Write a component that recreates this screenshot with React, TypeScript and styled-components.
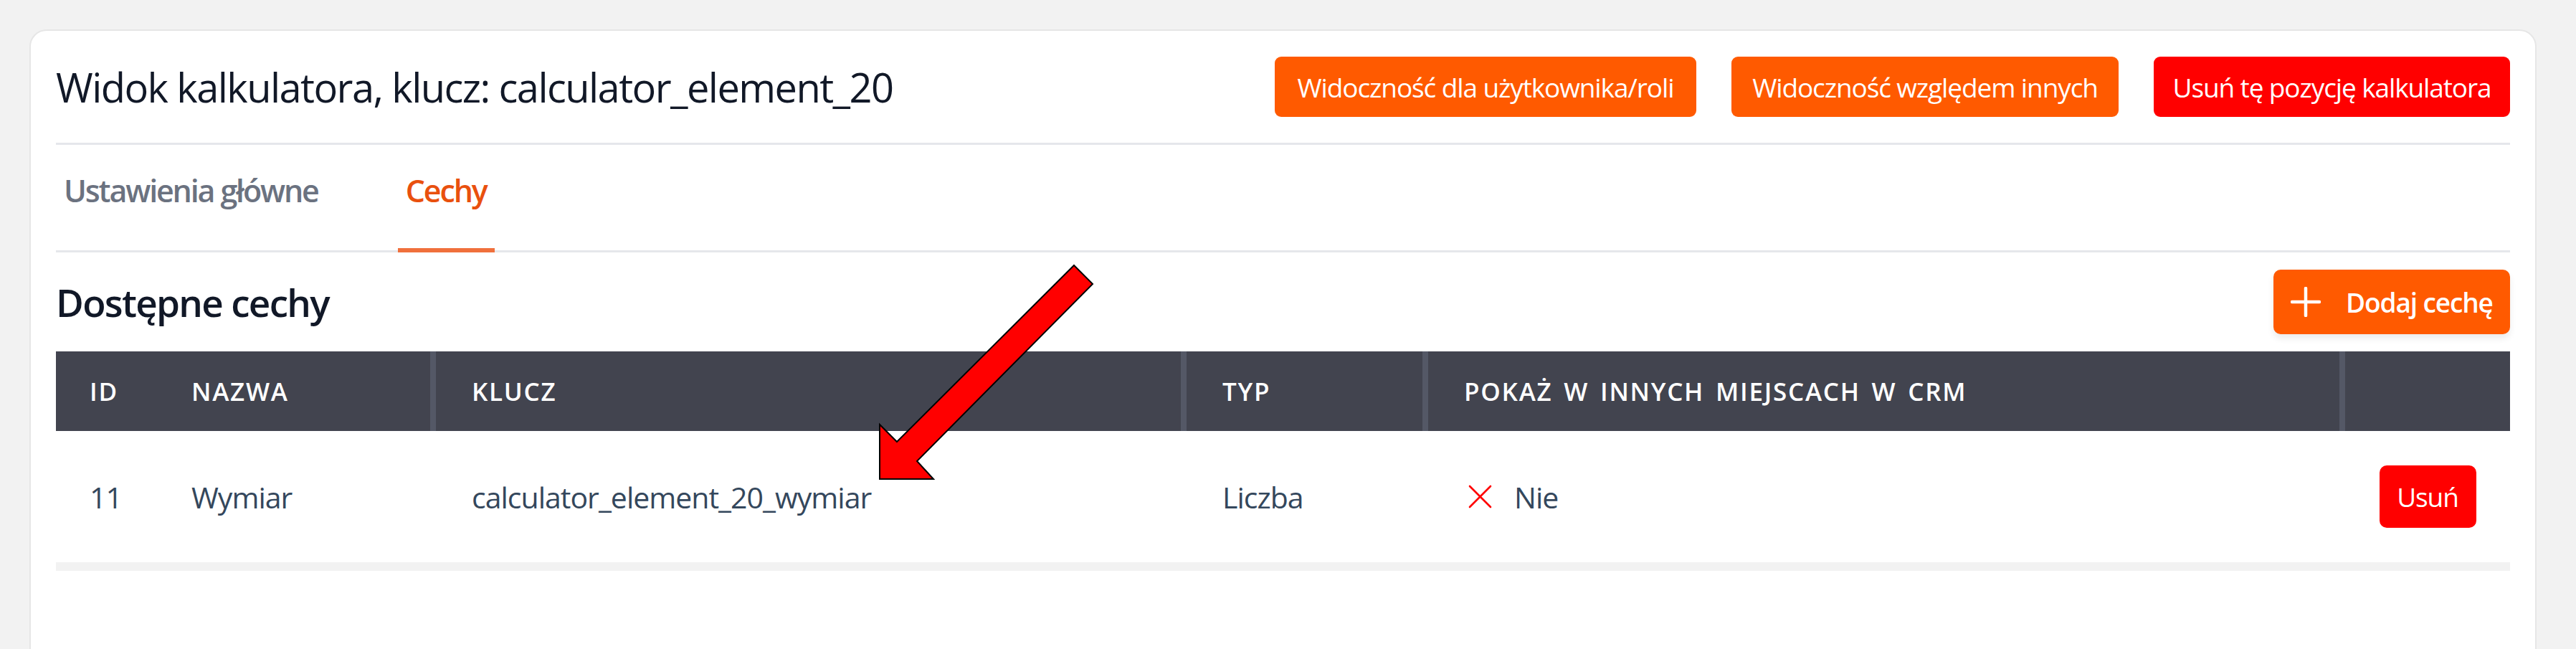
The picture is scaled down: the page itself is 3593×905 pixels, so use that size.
import React from "react";
import styled, { createGlobalStyle } from "styled-components";

const GlobalStyle = createGlobalStyle`
  html, body {
    margin: 0;
    padding: 0;
    background: #f2f2f2;
  }
  body {
    font-family: "Open Sans", "Noto Sans", "DejaVu Sans", sans-serif;
  }
  *, *::before, *::after {
    box-sizing: border-box;
  }
`;

const Page = styled.div`
  position: relative;
  width: 3593px;
  height: 905px;
  overflow: hidden;
  padding: 41px 55px 0 41px;
`;

const Card = styled.section`
  background: #ffffff;
  border: 2px solid #e6e6e6;
  border-radius: 24px;
  padding: 36px 35px 0;
  min-height: 1000px;
`;

const Header = styled.header`
  display: flex;
  align-items: center;
  gap: 49px;
  padding-bottom: 36px;
  border-bottom: 3px solid #e5e7eb;
`;

const Title = styled.h1`
  flex: 1;
  margin: 0;
  font-size: 56px;
  line-height: 84px;
  font-weight: 400;
  color: #111827;
  letter-spacing: -0.028em;
  white-space: nowrap;
`;

const ActionButton = styled.button<{ $tone: "orange" | "red"; $w: number }>`
  width: ${(p) => p.$w}px;
  height: 84px;
  padding: 0;
  border: 0;
  border-radius: 9px;
  background: ${(p) => (p.$tone === "red" ? "#ff0000" : "#ff5a00")};
  color: #ffffff;
  font-family: inherit;
  font-size: 37px;
  font-weight: 400;
  letter-spacing: -0.03em;
  white-space: nowrap;
  text-align: center;
`;

const Tabs = styled.nav`
  display: flex;
  gap: 100px;
  border-bottom: 3px solid #e5e7eb;
`;

const Tab = styled.div<{ $active?: boolean }>`
  padding: 34px 11px 50px;
  margin-bottom: -3px;
  border-bottom: 6px solid ${(p) => (p.$active ? "#f0703c" : "transparent")};
  font-size: 43px;
  line-height: 60px;
  font-weight: 600;
  letter-spacing: -0.05em;
  color: ${(p) => (p.$active ? "#e9500e" : "#6b7280")};
  white-space: nowrap;
`;

const SectionHead = styled.div`
  display: flex;
  align-items: center;
  justify-content: space-between;
  margin-top: 24px;
`;

const SectionTitle = styled.h2`
  margin: 0;
  font-size: 53px;
  font-weight: 600;
  letter-spacing: -0.032em;
  color: #111827;
`;

const AddButton = styled.button`
  display: flex;
  align-items: center;
  gap: 35px;
  width: 330px;
  height: 90px;
  padding: 0 0 0 24px;
  border: 0;
  border-radius: 10px;
  background: #ff5a00;
  box-shadow: 0 6px 10px rgba(0, 0, 0, 0.08);
  color: #ffffff;
  font-family: inherit;
  font-size: 37px;
  font-weight: 600;
  letter-spacing: -0.03em;
  white-space: nowrap;
`;

const Table = styled.div`
  margin-top: 24px;
  border-bottom: 12px solid #f2f2f2;
`;

const COLUMNS = "142px 380px 1047px 337px 1279px 238px";

const HeadRow = styled.div`
  display: grid;
  grid-template-columns: ${COLUMNS};
  height: 111px;
  background: #42444f;
`;

const HeadCell = styled.div<{ $sep?: boolean }>`
  display: flex;
  align-items: center;
  padding-left: ${(p) => (p.$sep ? "50px" : "47px")};
  border-left: ${(p) => (p.$sep ? "8px solid #545866" : "0")};
  color: #ffffff;
  font-size: 35px;
  font-weight: 600;
  letter-spacing: 0.05em;
  word-spacing: 5px;
  text-transform: uppercase;
  white-space: nowrap;
`;

const BodyRow = styled.div`
  display: grid;
  grid-template-columns: ${COLUMNS};
  height: 183px;
  background: #ffffff;
`;

const Cell = styled.div<{ $sep?: boolean; $center?: boolean }>`
  display: flex;
  align-items: center;
  justify-content: ${(p) => (p.$center ? "center" : "flex-start")};
  gap: 37px;
  padding-left: ${(p) => (p.$center ? "0" : p.$sep ? "50px" : "47px")};
  border-left: ${(p) => (p.$sep ? "8px solid transparent" : "0")};
  color: #34475c;
  font-size: 41px;
  font-weight: 400;
  letter-spacing: -0.024em;
  white-space: nowrap;
`;

const DeleteButton = styled.button`
  width: 135px;
  height: 87px;
  padding: 0;
  border: 0;
  border-radius: 10px;
  background: #ff0000;
  color: #ffffff;
  font-family: inherit;
  font-size: 37px;
  font-weight: 400;
  letter-spacing: -0.03em;
`;

const CrossMark = styled.svg`
  flex: none;
  margin-left: 6px;
  margin-right: -6px;
`;

const Annotation = styled.svg`
  position: absolute;
  left: 0;
  top: 0;
  pointer-events: none;
`;

const PlusIcon = () => (
  <svg width="42" height="42" viewBox="0 0 42 42" fill="none">
    <path d="M21 2v38M2 21h38" stroke="#ffffff" strokeWidth="4.5" strokeLinecap="round" />
  </svg>
);

const columns = [
  { label: "ID", sep: false },
  { label: "Nazwa", sep: false },
  { label: "Klucz", sep: true },
  { label: "Typ", sep: true },
  { label: "Pokaż w innych miejscach w CRM", sep: true },
  { label: "", sep: true },
];

export default function App() {
  return (
    <>
      <GlobalStyle />
      <Page>
        <Card>
          <Header>
            <Title>Widok kalkulatora, klucz: calculator_element_20</Title>
            <ActionButton $tone="orange" $w={588}>Widoczność dla użytkownika/roli</ActionButton>
            <ActionButton $tone="orange" $w={540}>Widoczność względem innych</ActionButton>
            <ActionButton $tone="red" $w={497}>Usuń tę pozycję kalkulatora</ActionButton>
          </Header>

          <Tabs>
            <Tab>Ustawienia główne</Tab>
            <Tab $active>Cechy</Tab>
          </Tabs>

          <SectionHead>
            <SectionTitle>Dostępne cechy</SectionTitle>
            <AddButton>
              <PlusIcon />
              Dodaj cechę
            </AddButton>
          </SectionHead>

          <Table>
            <HeadRow>
              {columns.map((c, i) => (
                <HeadCell key={i} $sep={c.sep}>
                  {c.label}
                </HeadCell>
              ))}
            </HeadRow>
            <BodyRow>
              <Cell>11</Cell>
              <Cell>Wymiar</Cell>
              <Cell $sep>calculator_element_20_wymiar</Cell>
              <Cell $sep>Liczba</Cell>
              <Cell $sep>
                <CrossMark width="33" height="33" viewBox="0 0 33 33" fill="none">
                  <path d="M2 2L31 31M31 2L2 31" stroke="#ff0000" strokeWidth="2.6" strokeLinecap="round" />
                </CrossMark>
                Nie
              </Cell>
              <Cell $sep $center>
                <DeleteButton>Usuń</DeleteButton>
              </Cell>
            </BodyRow>
          </Table>
        </Card>

        <Annotation width="3593" height="905" viewBox="0 0 3593 905">
          <polygon
            points="1498,370 1524,396 1279,643 1302,668 1227,668 1227,592 1251,616"
            fill="#ff0000"
            stroke="#000000"
            strokeWidth="2"
            strokeLinejoin="miter"
          />
        </Annotation>
      </Page>
    </>
  );
}
